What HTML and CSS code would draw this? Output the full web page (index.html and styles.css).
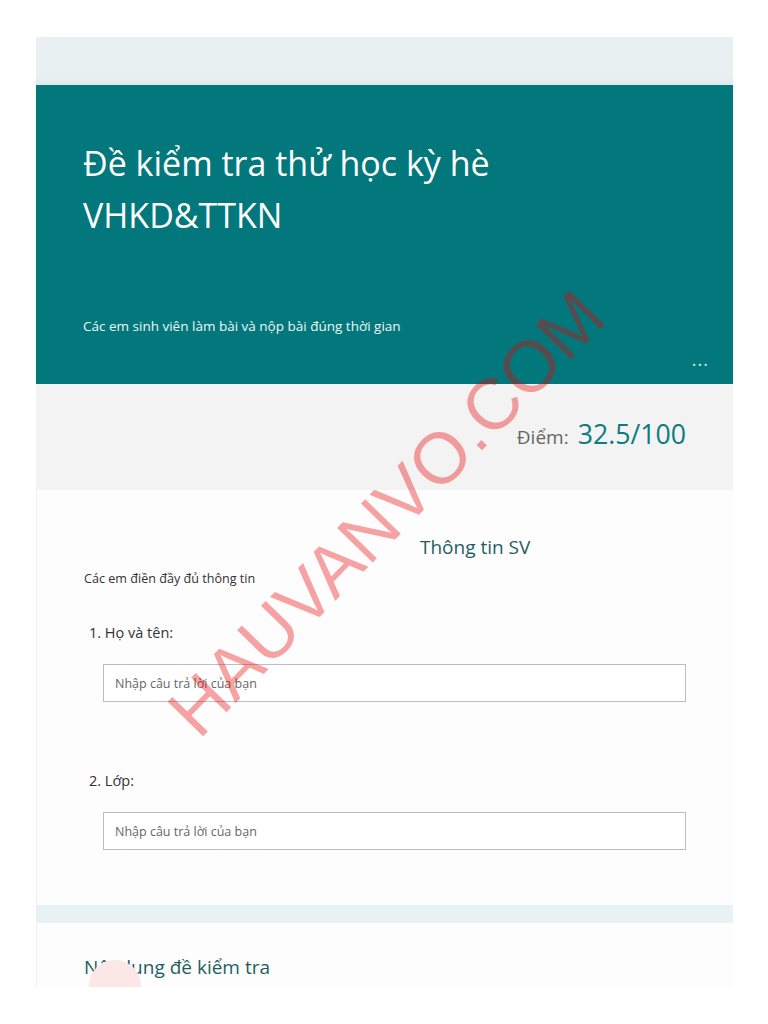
FILE: index.html
```html
<!DOCTYPE html>
<html lang="vi">
<head>
<meta charset="utf-8">
<title>Đề kiểm tra thử học kỳ hè VHKD&amp;TTKN</title>
<link rel="stylesheet" href="styles.css">
</head>
<body>
<div class="page">
  <div class="topband"></div>
  <header class="hero">
    <h1 class="title">Đề kiểm tra thử học kỳ hè<br>VHKD&amp;TTKN</h1>
    <p class="subtitle">Các em sinh viên làm bài và nộp bài đúng thời gian</p>
    <div class="more">···</div>
  </header>
  <div class="score">
    <span class="score-label">Điểm:</span>
    <span class="score-value">32.5/100</span>
  </div>
  <section class="card">
    <h2 class="section-title">Thông tin SV</h2>
    <p class="section-desc">Các em điền đầy đủ thông tin</p>
    <div class="question">
      <div class="q-label">1. Họ và tên:</div>
      <div class="q-input">Nhập câu trả lời của bạn</div>
    </div>
    <div class="question q2">
      <div class="q-label">2. Lớp:</div>
      <div class="q-input">Nhập câu trả lời của bạn</div>
    </div>
  </section>
  <div class="sepband"></div>
  <section class="card card2">
    <h2 class="section-title2">Nội dung đề kiểm tra</h2>
    <div class="blob"></div>
  </section>
  <div class="watermark">HAUVANVO.COM</div>
</div>
</body>
</html>
```
FILE: styles.css
```css
html, body {
  margin: 0;
  padding: 0;
  background: #ffffff;
}
body {
  font-family: "Open Sans", "Noto Sans", sans-serif;
  color: #333333;
}
.page {
  position: relative;
  width: 697px;
  margin: 37px 0 0 36px;
}
.topband {
  height: 48px;
  background: linear-gradient(#e8f0f2 0, #e8f0f2 40px, #dfe8ea 48px);
}
.hero {
  position: relative;
  height: 299px;
  background: #03787c;
  color: #ffffff;
  box-sizing: border-box;
  padding: 52px 47px 0 47px;
}
.title {
  margin: 0;
  font-weight: 400;
  font-size: 34px;
  line-height: 52px;
}
.subtitle {
  margin: 76px 0 0 0;
  font-size: 13.5px;
  line-height: 18px;
  color: #eef6f6;
}
.more {
  position: absolute;
  right: 24px;
  bottom: 8px;
  font-size: 18px;
  letter-spacing: 1px;
  color: #d6ecec;
}
.score {
  height: 106px;
  background: #f3f3f3;
  box-sizing: border-box;
  display: flex;
  justify-content: flex-end;
  align-items: baseline;
  padding: 31px 47px 0 0;
  gap: 9px;
}
.score-label {
  font-size: 19px;
  color: #666666;
}
.score-value {
  font-size: 26.7px;
  color: #0b7c80;
}
.card {
  position: relative;
  background: #fdfdfd;
  border-left: 1px solid #f0f0f0;
  box-sizing: border-box;
  height: 415px;
  padding: 44px 47px 0 47px;
  display: flex;
  flex-direction: column;
}
.section-title {
  margin: 0 0 0 336px;
  font-size: 19px;
  font-weight: 400;
  line-height: 26px;
  color: #1f605f;
}
.section-desc {
  margin: 10px 0 0 0;
  font-size: 12.6px;
  line-height: 18px;
  color: #333333;
}
.question {
  margin-top: 34px;
}
.q2 {
  margin-top: 68px;
}
.q-label {
  margin-left: 5px;
  font-size: 14.5px;
  line-height: 22px;
  color: #333333;
}
.q-input {
  margin: 20px 0 0 19px;
  height: 38px;
  width: 583px;
  box-sizing: border-box;
  border: 1px solid #bdbdbd;
  background: #ffffff;
  padding-left: 11px;
  display: flex;
  align-items: center;
  font-size: 12.5px;
  color: #666666;
}
.sepband {
  height: 18px;
  background: #e8f1f3;
}
.card2 {
  height: 64px;
  padding-top: 32px;
  overflow: hidden;
}
.section-title2 {
  margin: 0;
  font-size: 19px;
  font-weight: 400;
  line-height: 24px;
  color: #1f605f;
}
.blob {
  position: absolute;
  left: 52px;
  top: 37px;
  width: 52px;
  height: 52px;
  border-radius: 50%;
  background: #fce7e7;
}
.watermark {
  position: absolute;
  left: 350px;
  top: 476px;
  width: 640px;
  height: 80px;
  margin-left: -320px;
  margin-top: -40px;
  line-height: 80px;
  text-align: center;
  font-family: "Liberation Sans", Arial, sans-serif;
  font-size: 72px;
  color: rgba(235, 0, 0, 0.36);
  transform: rotate(-45.7deg);
  white-space: nowrap;
  pointer-events: none;
}
```
